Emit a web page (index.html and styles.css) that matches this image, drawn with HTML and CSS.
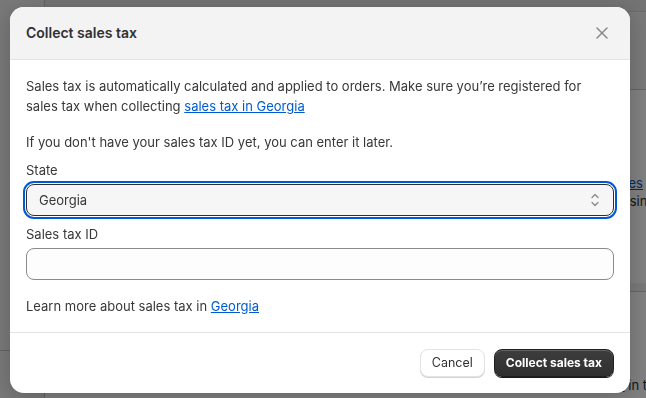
FILE: index.html
```html
<!DOCTYPE html>
<html lang="en">
<head>
<meta charset="utf-8">
<title>Collect sales tax</title>
<link rel="stylesheet" href="styles.css">
</head>
<body>
<div class="page">
  <aside class="side">
    <div class="side-top"></div>
    <div class="side-bottom"></div>
  </aside>
  <main class="main">
    <div class="topbar"></div>
    <section class="card card-a">
      <p class="bg-line bg-line-1"><a href="#">Taxes</a> in</p>
      <p class="bg-line bg-line-2">busin</p>
    </section>
    <section class="card card-b">
      <p class="bg-line bg-line-3"><a href="#">Learn about tax rates</a> in th</p>
    </section>
  </main>
</div>

<div class="overlay"></div>

<div class="modal" role="dialog" aria-labelledby="modal-title">
  <header class="modal-header">
    <h2 id="modal-title" class="modal-title">Collect sales tax</h2>
    <button class="close-btn" aria-label="Close">
      <svg width="12" height="12" viewBox="0 0 12 12" aria-hidden="true"><path d="M1 1L11 11M11 1L1 11" stroke="#8a8a8a" stroke-width="1.5" stroke-linecap="round"/></svg>
    </button>
  </header>
  <div class="modal-body">
    <p class="text">Sales tax is automatically calculated and applied to orders. Make sure you’re registered for<br>sales tax when collecting <a href="#" class="link">sales tax in Georgia</a></p>
    <div class="form-group">
      <p class="text">If you don't have your sales tax ID yet, you can enter it later.</p>
      <div class="field">
        <label class="label">State</label>
        <div class="select">
          <span class="select-value">Georgia</span>
          <svg class="select-icon" width="8" height="14" viewBox="0 0 8 14" aria-hidden="true"><path d="M1 4.5L4 1.5L7 4.5M1 9.5L4 12.5L7 9.5" fill="none" stroke="#8a8a8a" stroke-width="1.3" stroke-linecap="round" stroke-linejoin="round"/></svg>
        </div>
      </div>
      <div class="field">
        <label class="label">Sales tax ID</label>
        <div class="input"></div>
      </div>
    </div>
    <p class="text">Learn more about sales tax in <a href="#" class="link">Georgia</a></p>
  </div>
  <footer class="modal-footer">
    <button class="btn btn-secondary">Cancel</button>
    <button class="btn btn-primary">Collect sales tax</button>
  </footer>
</div>
</body>
</html>
```

FILE: styles.css
```css
* { box-sizing: border-box; }

html, body {
  margin: 0;
  padding: 0;
  width: 646px;
  height: 398px;
  overflow: hidden;
}

body {
  font-family: Inter, "Noto Sans", "Liberation Sans", sans-serif;
  font-size: 13px;
  line-height: 20px;
  color: #303030;
  background: #f1f1f1;
}

/* background page (dimmed by overlay) */
.page {
  display: flex;
  width: 646px;
  height: 398px;
}

.side {
  width: 45px;
  flex: none;
  border-right: 1px solid #c4c4c4;
  display: flex;
  flex-direction: column;
}

.side-top { height: 351px; border-bottom: 1px solid #c4c4c4; }
.side-bottom { flex: 1; }

.main {
  flex: 1;
  display: flex;
  flex-direction: column;
  min-width: 0;
}

.topbar {
  height: 12px;
  background: #e6e6e6;
  border-bottom: 1px solid #d6d6d6;
  margin-bottom: 77px;
}

.card {
  background: #ffffff;
  border-top: 1px solid #c8c8c8;
}

.card-a {
  height: 194px;
  padding: 84px 0 0 562px;
}

.card-b {
  margin-top: 8px;
  flex: 1;
  padding: 84px 0 0 449px;
}

.bg-line {
  margin: 0;
  white-space: nowrap;
  color: #303030;
  font-size: 13px;
  line-height: 18px;
}

.bg-line a { color: #005bd3; }

.bg-line-2 { padding-left: 7px; }

.overlay {
  position: fixed;
  inset: 0;
  background: rgba(0, 0, 0, 0.5);
}

/* modal */
.modal {
  position: fixed;
  left: 10px;
  top: 7px;
  width: 620px;
  background: #ffffff;
  border-radius: 14px;
  overflow: hidden;
  box-shadow: 0 4px 20px rgba(0, 0, 0, 0.2);
}

.modal-header {
  height: 53px;
  background: #f3f3f3;
  border-bottom: 1px solid #e3e3e3;
  display: flex;
  align-items: center;
  justify-content: space-between;
  padding: 0 16px;
}

.modal-title {
  margin: 0;
  font-size: 14px;
  font-weight: 600;
  line-height: 20px;
  color: #303030;
}

.close-btn {
  border: 0;
  background: transparent;
  padding: 0;
  width: 20px;
  height: 20px;
  display: flex;
  align-items: center;
  justify-content: center;
  margin-right: 2px;
}

.modal-body {
  padding: 16px;
  display: flex;
  flex-direction: column;
  gap: 16px;
}

.text {
  margin: 0;
  font-size: 13px;
  line-height: 20px;
  color: #383838;
}

.link {
  color: #005bd3;
  text-decoration: underline;
}

.form-group {
  display: flex;
  flex-direction: column;
  gap: 8px;
}

.field {
  display: flex;
  flex-direction: column;
  gap: 4px;
}

.label {
  font-size: 13px;
  line-height: 20px;
  color: #383838;
}

.select {
  height: 32px;
  border: 1px solid #303030;
  border-radius: 8px;
  background: #f6f6f6;
  outline: 2px solid #005bd3;
  outline-offset: 1px;
  display: flex;
  align-items: center;
  justify-content: space-between;
  padding: 0 14px 0 12px;
}

.select-value { color: #383838; }

.input {
  height: 32px;
  border: 1px solid #8a8a8a;
  border-radius: 8px;
  background: #fdfdfd;
}

.modal-footer {
  border-top: 1px solid #e3e3e3;
  padding: 16px;
  display: flex;
  justify-content: flex-end;
  gap: 9px;
}

.btn {
  height: 28px;
  padding: 0 11px;
  border-radius: 8px;
  font-family: inherit;
  line-height: 20px;
}

.btn-secondary {
  background: #ffffff;
  color: #303030;
  font-size: 12.5px;
  font-weight: 400;
  border: 1px solid #e3e3e3;
  box-shadow: 0 1px 0 #d4d4d4;
}

.btn-primary {
  background: linear-gradient(#3d3d3d, #303030);
  color: #ffffff;
  font-size: 12px;
  font-weight: 650;
  border: 1px solid #1f1f1f;
  box-shadow: inset 0 1px 0 rgba(255, 255, 255, 0.2), 0 1px 0 #1a1a1a;
}
```
